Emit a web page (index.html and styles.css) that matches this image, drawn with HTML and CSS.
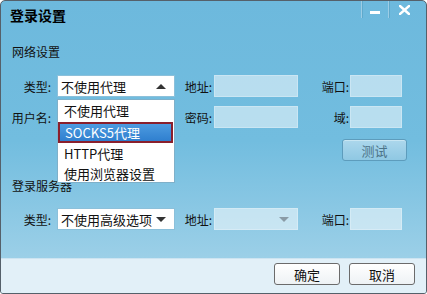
FILE: index.html
```html
<!DOCTYPE html>
<html lang="zh-CN">
<head>
    <meta charset="UTF-8">
    <title>登录设置</title>
    <link rel="stylesheet" href="styles.css">
</head>
<body>
    <div class="window">
        <div class="titlebar">
            <span class="title">登录设置</span>
            <div class="win-btn min"><span class="dash"></span></div>
            <div class="win-btn close">
                <svg width="11" height="10" viewBox="0 0 11 10"><path d="M1 1 L10 9 M10 1 L1 9" stroke="#fff" stroke-width="2.4" stroke-linecap="square"/></svg>
            </div>
        </div>

        <div class="content">
            <div class="section">网络设置</div>
            <div class="row">
                <span class="lbl first">类型:</span>
                <div class="select open">不使用代理<span class="arrow up"></span></div>
                <span class="lbl second">地址:</span>
                <div class="input wide"></div>
                <span class="lbl third">端口:</span>
                <div class="input port"></div>
            </div>
            <div class="row gap">
                <span class="lbl first">用户名:</span>
                <div class="select-space"></div>
                <span class="lbl second">密码:</span>
                <div class="input wide"></div>
                <span class="lbl third">域:</span>
                <div class="input port"></div>
            </div>
            <div class="test-row">
                <div class="btn test">测试</div>
            </div>

            <div class="section second-section">登录服务器</div>
            <div class="row low">
                <span class="lbl first">类型:</span>
                <div class="select">不使用高级选项<span class="arrow down"></span></div>
                <span class="lbl second">地址:</span>
                <div class="input wide combo"><span class="arrow down grey"></span></div>
                <span class="lbl third">端口:</span>
                <div class="input port"></div>
            </div>

            <ul class="dropdown">
                <li>不使用代理</li>
                <li class="selected">SOCKS5代理</li>
                <li>HTTP代理</li>
                <li>使用浏览器设置</li>
            </ul>
        </div>

        <div class="footer">
            <div class="btn">确定</div>
            <div class="btn">取消</div>
        </div>
    </div>
</body>
</html>
```

FILE: styles.css
```css
body {
    margin: 0;
    background: #fff;
    font-family: "Noto Sans CJK SC", "Liberation Sans", sans-serif;
    font-size: 12px;
    color: #111;
}
.window {
    width: 427px;
    height: 294px;
    box-sizing: border-box;
    border: 1px solid #55606a;
    border-radius: 5px 5px 3px 3px;
    overflow: hidden;
    display: flex;
    flex-direction: column;
    background: linear-gradient(#6db9dd 0, #72bddf 140px, #a8d5ea 100%);
}
.titlebar {
    height: 30px;
    display: flex;
    align-items: flex-start;
    flex-shrink: 0;
}
.title {
    font-size: 14px;
    font-weight: bold;
    color: #000;
    line-height: 14px;
    margin: 7px 0 0 9px;
    flex-grow: 1;
}
.win-btn {
    width: 26px;
    height: 17px;
    display: flex;
    justify-content: center;
    align-items: center;
    border-left: 1px solid #9ccde6;
    box-shadow: inset 1px 0 0 #5fa9cc;
}
.win-btn.close {
    width: 30px;
    margin-right: 7px;
}
.dash {
    width: 10px;
    height: 3px;
    background: #fff;
    margin-top: 6px;
}
.content {
    position: relative;
    flex-grow: 1;
}
.section {
    line-height: 14px;
    margin: 14px 0 0 11px;
}
.second-section {
    margin-top: 18px;
}
.row {
    display: flex;
    align-items: center;
    height: 22px;
    margin-top: 16px;
}
.row.gap {
    margin-top: 9px;
}
.row.low {
    margin-top: 15px;
}
.lbl {
    text-align: right;
    white-space: nowrap;
}
.lbl.first {
    width: 50px;
    margin-right: 6px;
}
.lbl.second {
    width: 37px;
    margin-right: 2px;
}
.lbl.third {
    width: 51px;
    margin-right: 1px;
}
.select, .select-space {
    width: 118px;
    height: 22px;
    box-sizing: border-box;
}
.select {
    background: #fff;
    border: 1px solid #8cc0da;
    display: flex;
    align-items: center;
    padding-left: 3px;
    font-size: 13px;
    position: relative;
}
.arrow {
    position: absolute;
    right: 8px;
    top: 8px;
    width: 0;
    height: 0;
    border-left: 5px solid transparent;
    border-right: 5px solid transparent;
}
.arrow.up {
    border-bottom: 5px solid #333;
}
.arrow.down {
    border-top: 5px solid #333;
}
.arrow.grey {
    border-top-color: #8a9ba6;
}
.input {
    height: 22px;
    box-sizing: border-box;
    background: rgba(255, 255, 255, 0.5);
    border: 1px solid rgba(255, 255, 255, 0.25);
    position: relative;
}
.input.wide {
    width: 84px;
}
.input.port {
    width: 52px;
}
.test-row {
    display: flex;
    justify-content: flex-end;
    margin-top: 11px;
    padding-right: 19px;
}
.btn {
    width: 66px;
    height: 22px;
    box-sizing: border-box;
    border: 1px solid #6b6b6b;
    border-radius: 3px;
    background: linear-gradient(#ffffff, #eef2f5);
    display: flex;
    justify-content: center;
    align-items: center;
    font-size: 13px;
}
.btn.test {
    width: 65px;
    border-color: #5d9cbc;
    background: linear-gradient(#acd7ec, #8fc8e3);
    color: #4c7388;
    box-shadow: inset 0 1px 0 #c8e6f3;
}
.dropdown {
    position: absolute;
    left: 56px;
    top: 68px;
    width: 118px;
    height: 84px;
    box-sizing: border-box;
    margin: 0;
    padding: 1px 0 0;
    list-style: none;
    background: #fff;
    border: 1px solid #7fb0c9;
    font-size: 13px;
}
.dropdown li {
    height: 20px;
    line-height: 20px;
    padding-left: 6px;
}
.dropdown li.selected {
    margin: 1px 1px 1px 0;
    height: 21px;
    line-height: 17px;
    box-sizing: border-box;
    border: 2px solid #8a1f2c;
    background: linear-gradient(#4d9be0, #2f7fcf);
    color: #fff;
    padding-left: 5px;
}
.footer {
    height: 35px;
    flex-shrink: 0;
    background: #e2f0f8;
    border-top: 1px solid #cde4f1;
    display: flex;
    justify-content: flex-end;
    gap: 9px;
    padding: 4px 11px 0 0;
    box-sizing: border-box;
}
```
